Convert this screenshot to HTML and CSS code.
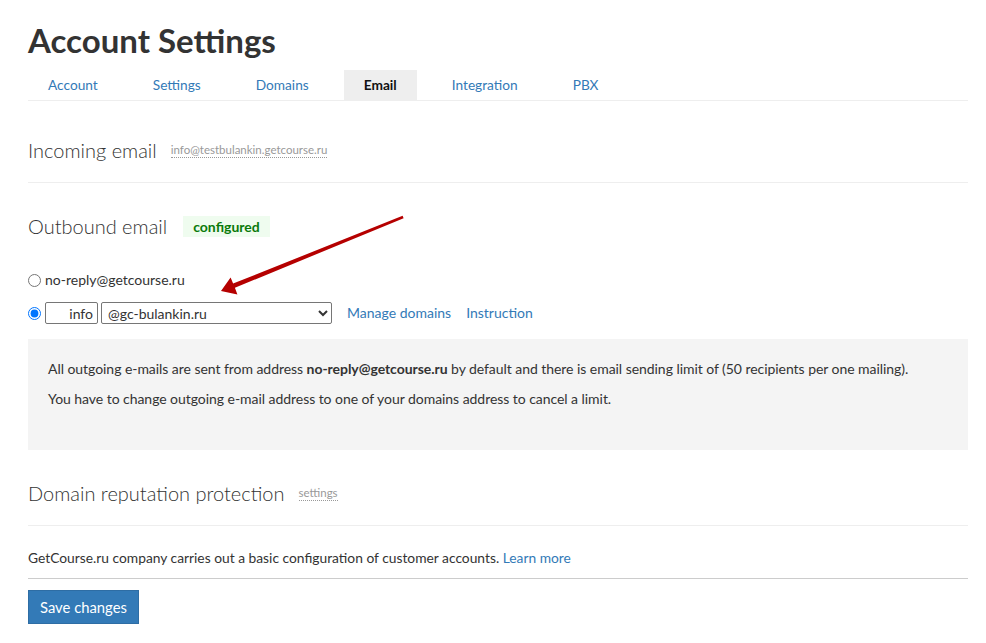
FILE: index.html
```html
<!DOCTYPE html>
<html lang="en">

<head>
  <title>Account Settings</title>
  <meta charset="utf-8" />
  <link rel="stylesheet" href="styles.css">
</head>

<body>
  <div class="page">
    <h1 class="title">Account Settings</h1>
    <ul class="tabs">
      <li class="tab"><a href="#">Account</a></li>
      <li class="tab"><a href="#">Settings</a></li>
      <li class="tab"><a href="#">Domains</a></li>
      <li class="tab active"><a href="#">Email</a></li>
      <li class="tab"><a href="#">Integration</a></li>
      <li class="tab"><a href="#">PBX</a></li>
    </ul>

    <div class="section" id="incoming">
      <h2 class="heading">Incoming email <span class="hint">info@testbulankin.getcourse.ru</span></h2>
    </div>

    <div class="section" id="outbound">
      <h2 class="heading">Outbound email <span class="badge">configured</span></h2>
      <label class="radioRow first">
        <input type="radio" name="from"> no-reply@getcourse.ru
      </label>
      <div class="radioRow second">
        <input type="radio" name="from" checked>
        <input class="field" id="localPart" type="text" value="info">
        <select class="field" id="domain">
          <option>@gc-bulankin.ru</option>
        </select>
        <a class="link" href="#">Manage domains</a>
        <a class="link" href="#">Instruction</a>
      </div>
      <div class="notice">
        <p>All outgoing e-mails are sent from address <b>no-reply@getcourse.ru</b> by default and there is email sending limit of (50 recipients per one mailing).</p>
        <p>You have to change outgoing e-mail address to one of your domains address to cancel a limit.</p>
      </div>
    </div>

    <div class="section" id="reputation">
      <h2 class="heading">Domain reputation protection <span class="hint">settings</span></h2>
    </div>

    <p class="footnote">GetCourse.ru company carries out a basic configuration of customer accounts. <a class="link" href="#">Learn more</a></p>
    <div class="actions">
      <button class="saveButton">Save changes</button>
    </div>
  </div>

  <!-- red annotation arrow drawn over the page -->
  <svg class="arrow" width="986" height="643" viewBox="0 0 986 643">
    <polygon fill="#b50000" points="221,291 230.6,277.4 233.1,283.6 402.6,215.8 403.6,218.2 234.9,287.8 237.4,294.5" />
  </svg>
</body>

</html>
```

FILE: styles.css
```css
html,
body {
  margin: 0;
  background: white;
}

body {
  font: 14px Lato, "Open Sans", Arial, sans-serif;
  color: #333;
}

.page {
  padding: 0 18px 0 28px;
}

.title {
  margin: 0;
  padding-top: 22px;
  font-size: 33px;
  line-height: 36px;
  font-weight: 700;
  color: #333;
}

.tabs {
  display: flex;
  gap: 15px;
  list-style: none;
  margin: 12px 0 0;
  padding: 0;
  border-bottom: 1px solid #eee;
}

.tab a {
  display: block;
  padding: 0 20px;
  line-height: 30px;
  font-size: 13.7px;
  color: #337ab7;
  text-decoration: none;
}

.tab.active a {
  background: #eee;
  color: #111;
  font-weight: 700;
}

.section {
  border-bottom: 1px solid #eee;
}

#incoming {
  padding: 37px 0 20px;
}

#outbound {
  padding-top: 31px;
  border: none;
}

#reputation {
  padding: 31px 0 20px;
}

.heading {
  margin: 0;
  font-size: 20px;
  line-height: 24px;
  font-weight: 300;
  color: #333;
  display: flex;
  align-items: center;
}

.hint {
  margin-left: 14px;
  font-size: 11.5px;
  font-weight: 400;
  line-height: 14px;
  color: #999;
  border-bottom: 1px dotted #999;
}

.badge {
  margin-left: 16px;
  padding: 0 10px;
  line-height: 21px;
  font-size: 14px;
  font-weight: 700;
  color: #0a7a0a;
  background: #effcef;
}

.radioRow {
  display: flex;
  align-items: center;
  line-height: 20px;
}

.radioRow input[type=radio] {
  margin: 0 4px 0 0;
  width: 13px;
  height: 13px;
}

.radioRow.first {
  margin-top: 32px;
}

.radioRow.second {
  margin-top: 12px;
}

.field {
  box-sizing: border-box;
  height: 22px;
  font: inherit;
  color: #333;
  border: 1px solid #767676;
  border-radius: 2px;
  background: white;
}

#localPart {
  width: 53px;
  padding: 0 4px;
  text-align: right;
}

#domain {
  width: 231px;
  margin-left: 3px;
  padding: 0 2px;
}

.link {
  color: #337ab7;
  text-decoration: none;
}

.radioRow .link {
  margin-left: 15px;
}

.notice {
  margin-top: 15px;
  padding: 20px 20px 31px;
  height: 60px;
  background: #f4f4f4;
}

.notice p {
  margin: 0 0 10px;
  line-height: 20px;
  white-space: nowrap;
  letter-spacing: -0.05px;
}

.footnote {
  margin: 22px 0 0;
  font-size: 13.8px;
  line-height: 20px;
  padding-bottom: 10px;
  border-bottom: 1px solid #ccc;
}

.actions {
  padding-top: 11px;
}

.saveButton {
  height: 34px;
  padding: 0 11px;
  font: inherit;
  font-size: 14.8px;
  color: white;
  background: #337ab7;
  border: 1px solid #2e6da4;
  border-radius: 0;
}

.arrow {
  position: absolute;
  left: 0;
  top: 0;
  pointer-events: none;
}
```
